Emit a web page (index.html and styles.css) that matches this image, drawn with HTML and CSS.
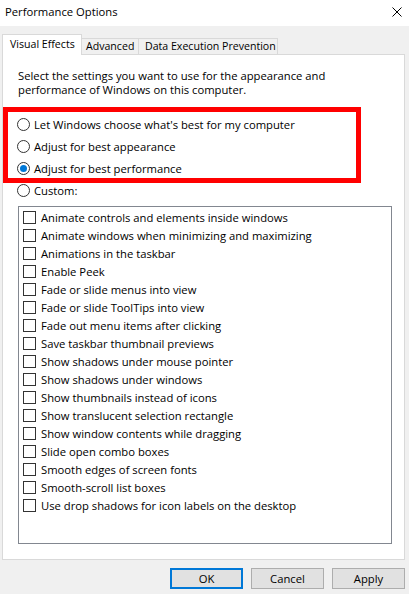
FILE: index.html
```html
<!DOCTYPE html>
<html lang="en">
<head>
<meta charset="utf-8">
<title>Performance Options</title>
<link rel="stylesheet" href="styles.css">
</head>
<body>
<div class="window">
  <div class="titlebar">
    <span class="title">Performance Options</span>
    <svg class="close" width="10" height="10" viewBox="0 0 10 10" aria-hidden="true">
      <path d="M0.5 0.5 L9.5 9.5 M9.5 0.5 L0.5 9.5" stroke="#000" stroke-width="1" fill="none"/>
    </svg>
  </div>
  <div class="content">
    <div class="tabs">
      <div class="tab active">Visual Effects</div>
      <div class="tab tab-adv">Advanced</div>
      <div class="tab tab-dep">Data Execution Prevention</div>
    </div>
    <div class="panel">
      <p class="desc">Select the settings you want to use for the appearance and<br>performance of Windows on this computer.</p>
      <div class="radios">
        <div class="radio"><span class="circle"></span>Let Windows choose what's best for my computer</div>
        <div class="radio"><span class="circle"></span>Adjust for best appearance</div>
        <div class="radio"><span class="circle checked"></span>Adjust for best performance</div>
        <div class="radio"><span class="circle"></span>Custom:</div>
      </div>
      <div class="highlight"></div>
      <div class="list">
        <div class="item"><span class="box"></span>Animate controls and elements inside windows</div>
        <div class="item"><span class="box"></span>Animate windows when minimizing and maximizing</div>
        <div class="item"><span class="box"></span>Animations in the taskbar</div>
        <div class="item"><span class="box"></span>Enable Peek</div>
        <div class="item"><span class="box"></span>Fade or slide menus into view</div>
        <div class="item"><span class="box"></span>Fade or slide ToolTips into view</div>
        <div class="item"><span class="box"></span>Fade out menu items after clicking</div>
        <div class="item"><span class="box"></span>Save taskbar thumbnail previews</div>
        <div class="item"><span class="box"></span>Show shadows under mouse pointer</div>
        <div class="item"><span class="box"></span>Show shadows under windows</div>
        <div class="item"><span class="box"></span>Show thumbnails instead of icons</div>
        <div class="item"><span class="box"></span>Show translucent selection rectangle</div>
        <div class="item"><span class="box"></span>Show window contents while dragging</div>
        <div class="item"><span class="box"></span>Slide open combo boxes</div>
        <div class="item"><span class="box"></span>Smooth edges of screen fonts</div>
        <div class="item"><span class="box"></span>Smooth-scroll list boxes</div>
        <div class="item"><span class="box"></span>Use drop shadows for icon labels on the desktop</div>
      </div>
    </div>
    <div class="buttons">
      <button class="btn default">OK</button>
      <button class="btn">Cancel</button>
      <button class="btn">Apply</button>
    </div>
  </div>
</div>
</body>
</html>
```
FILE: styles.css
```css
* { box-sizing: border-box; }
html, body { margin: 0; padding: 0; }
body {
  width: 409px;
  height: 594px;
  background: #f0f0f0;
  font-family: "Open Sans", "Noto Sans", "Liberation Sans", sans-serif;
  font-size: 11.25px;
  color: #000;
  overflow: hidden;
}
.window { width: 409px; height: 594px; }
.titlebar {
  height: 26px;
  background: #fff;
  display: flex;
  align-items: center;
  justify-content: space-between;
  padding: 0 7px 2px 5px;
}
.title { font-size: 11.25px; line-height: 14px; }
.close { display: block; }
.content { padding-top: 8px; }
.tabs {
  display: flex;
  align-items: flex-end;
  padding-left: 2px;
  height: 20px;
}
.tab {
  flex: none;
  height: 16px;
  line-height: 14px;
  font-size: 10.6px;
  background: #f0f0f0;
  border-top: 1px solid #d9d9d9;
  border-right: 1px solid #d9d9d9;
  white-space: nowrap;
  overflow: hidden;
}
.tab.active {
  height: 21px;
  width: 80px;
  line-height: 18px;
  background: #fff;
  border: 1px solid #d9d9d9;
  border-bottom: none;
  margin-bottom: -1px;
  position: relative;
  z-index: 1;
  padding-left: 7px;
}
.tab-adv { width: 57px; padding-left: 4px; }
.tab-dep { width: 139px; padding-left: 6px; }
.panel {
  position: relative;
  margin-left: 2px;
  width: 403px;
  height: 506px;
  background: #fff;
  border: 1px solid #d9d9d9;
}
.desc {
  margin: 0;
  padding: 14px 0 0 15px;
  line-height: 14px;
}
.radios {
  margin-top: 16px;
  padding-left: 14px;
}
.radio {
  height: 22px;
  display: flex;
  align-items: center;
  gap: 4px;
}
.circle {
  width: 13px;
  height: 13px;
  border: 1px solid #333;
  border-radius: 50%;
  background: #fff;
  display: flex;
  align-items: center;
  justify-content: center;
  flex: none;
}
.circle.checked::after {
  content: "";
  width: 7px;
  height: 7px;
  border-radius: 50%;
  background: #0078d7;
}
.highlight {
  position: absolute;
  left: 0;
  top: 52px;
  width: 358px;
  height: 76px;
  border: 5px solid #ff0000;
  pointer-events: none;
}
.list {
  margin: 5px 0 0 15px;
  width: 374px;
  height: 338px;
  border: 1px solid #828790;
  padding: 1px 0 0 4px;
}
.item {
  height: 18px;
  display: flex;
  align-items: center;
  gap: 5px;
}
.box {
  width: 13px;
  height: 13px;
  border: 1px solid #333;
  background: #fff;
  flex: none;
}
.buttons {
  display: flex;
  justify-content: flex-end;
  gap: 8px;
  padding: 8px 4px 0 0;
}
.btn {
  width: 73px;
  height: 21px;
  background: #e1e1e1;
  border: 1px solid #adadad;
  font-family: inherit;
  font-size: 11.25px;
  color: #000;
  padding: 0;
  margin: 0;
}
.btn.default { border: 2px solid #0078d7; }
```
